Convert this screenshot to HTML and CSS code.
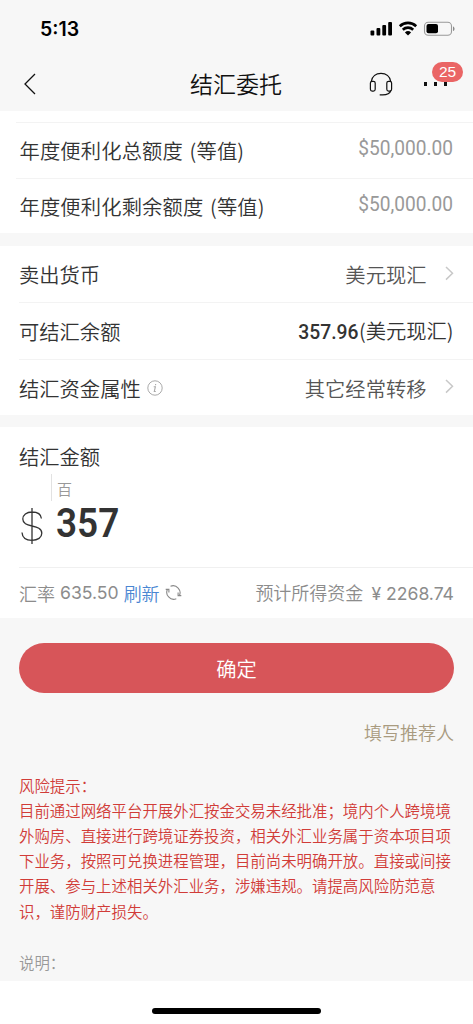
FILE: index.html
```
<!DOCTYPE html>
<html lang="zh-CN">
<head>
<meta charset="utf-8">
<meta name="viewport" content="width=device-width, initial-scale=1">
<title>结汇委托</title>
<link rel="stylesheet" href="styles.css">
</head>
<body>
<div class="status">
  <span class="time">5:13</span>
  <svg class="status-icons" width="86" height="16" viewBox="0 0 86 16">
    <rect x="0.5" y="9.6" width="3.8" height="4.9" rx="1"/>
    <rect x="6.5" y="7" width="3.8" height="7.5" rx="1"/>
    <rect x="12.3" y="4" width="3.8" height="10.5" rx="1"/>
    <rect x="18.2" y="1" width="3.8" height="13.5" rx="1"/>
    <path d="M29.8 5.2a11.8 11.8 0 0 1 16.4 0M32.8 8.7a7.6 7.6 0 0 1 10.4 0" fill="none" stroke="#000" stroke-width="2.6"/>
    <path d="M34.9 11.4a4.7 4.7 0 0 1 6.2 0L38 14.6z"/>
    <rect x="54.5" y="1.2" width="27" height="13" rx="3.8" fill="none" stroke="#999" stroke-width="1.1"/>
    <rect x="56.5" y="3.1" width="11.5" height="9.2" rx="2"/>
    <path d="M83 5.4c2 .7 2 3.900 0 4.600z" fill="#888"/>
  </svg>
</div>
<header class="nav">
  <svg class="back" width="12" height="22" viewBox="0 0 12 22"><path d="M11 1L1 11l10 10" fill="none" stroke="#111" stroke-width="1.3"/></svg>
  <h1 class="title">结汇委托</h1>
  <svg class="headset" width="24" height="24" viewBox="0 0 24 24" fill="none" stroke="#111" stroke-width="1.2">
    <path d="M2.300 9.500C3 4.300 7 1.300 12 1.300S21 4.300 21.700 9.500"/>
    <rect x="1.400" y="9.300" width="4.800" height="9.800" rx="1.800"/>
    <rect x="17.800" y="9.300" width="4.800" height="9.800" rx="1.800"/>
    <path d="M21.900 18.500c-.8 2.500-4.300 4.300-8.200 4.300h-3"/>
  </svg>
  <div class="more"><i></i><i></i><i></i><span class="badge">25</span></div>
</header>
<main>
  <section class="card quota">
    <div class="row"><span>年度便利化总额度 (等值)</span><span class="din light">$50,000.00</span></div>
    <div class="row"><span>年度便利化剩余额度 (等值)</span><span class="din light">$50,000.00</span></div>
  </section>
  <section class="card account">
    <div class="row"><span>卖出货币</span><span class="choice">美元现汇<svg width="9" height="15" viewBox="0 0 9 15"><path d="M1 1l6.500 6.300L1 13.600"/></svg></span></div>
    <div class="row"><span>可结汇余额</span><span class="balance"><b class="din">357.96</b>(美元现汇)</span></div>
    <div class="row"><span class="label">结汇资金属性<svg width="16" height="16" viewBox="0 0 16 16" fill="none" stroke="#aaa"><circle cx="8" cy="8" r="7.200"/><path d="M6.700 6.700h1.700L7.300 11.500h1.500M8.600 4v1.300" stroke-width="1.100"/></svg></span><span class="choice">其它经常转移<svg width="9" height="15" viewBox="0 0 9 15"><path d="M1 1l6.500 6.300L1 13.600"/></svg></span></div>
  </section>
  <section class="card amount">
    <div class="amount-label">结汇金额</div>
    <div class="unit">百</div>
    <div class="entry">
      <svg width="22" height="38" viewBox="0 0 22 38" fill="none" stroke="#333" stroke-width="1.300"><path d="M11 1v36M20.400 11.500C20 7.500 16.500 5 11 5S1.800 8 1.800 12c0 4.500 4 5.800 9.200 7s9.800 2.500 9.800 7.300c0 4.200-4 7-9.800 7S1.300 30.500 1 25.500"/></svg>
      <b class="din">357</b>
    </div>
    <div class="rate">
      <span class="rate-left">汇率 <span class="num">635.50</span> <a>刷新</a><svg width="17" height="17" viewBox="0 0 17 17" fill="none" stroke="#888" stroke-width="1.100"><path d="M5.500 2.200A7 7 0 0 1 14.300 11.800M11.300 14.800A7 7 0 0 1 2.500 5.200M.7 5.400h3.200v3.200M16.300 11.600h-3.200V8.400"/></svg></span>
      <span>预计所得资金 <span class="num yen">¥ 2268.74</span></span>
    </div>
  </section>
  <button class="confirm">确定</button>
  <a class="referrer">填写推荐人</a>
  <div class="risk">风险提示：<br>目前通过网络平台开展外汇按金交易未经批准；境内个人跨境境<br>外购房、直接进行跨境证券投资，相关外汇业务属于资本项目项<br>下业务，按照可兑换进程管理，目前尚未明确开放。直接或间接<br>开展、参与上述相关外汇业务，涉嫌违规。请提高风险防范意<br>识，谨防财产损失。</div>
  <div class="note">说明：</div>
</main>
<footer class="home"><span></span></footer>
</body>
</html>
```

FILE: styles.css
```
* { box-sizing: border-box; }
body {
  margin: 0;
  width: 473px;
  height: 1024px;
  overflow: hidden;
  display: flex;
  flex-direction: column;
  background: #f7f7f7;
  color: #333;
  font: 350 20.3px/28px "Noto Sans CJK SC", sans-serif;
  white-space: nowrap;
}
svg { flex: none; display: block; }
.status {
  height: 58px;
  flex: none;
  display: flex;
  justify-content: space-between;
  padding: 15px 17px 0 40px;
}
.time { font: 600 19.500px/28px Inter, sans-serif; color: #000; }
.status-icons { margin-top: 6px; }
.nav {
  height: 52.500px;
  flex: none;
  display: flex;
  align-items: center;
  padding: 0 19px 0 24px;
}
.title {
  margin: -3px 0 0 154px;
  width: 94px;
  font-size: 23px;
  font-weight: 350;
  color: #111;
}
.headset { margin-left: 85px; }
.more {
  position: relative;
  display: flex;
  gap: 7px;
  width: 26px;
  margin-left: 31px;
}
.more i { width: 3px; height: 4px; background: #111; }
.badge {
  position: absolute;
  left: 8px;
  top: -20.500px;
  width: 31px;
  height: 20px;
  border-radius: 10px;
  background: #ea6565;
  color: #fff;
  text-align: center;
  font: 400 15.500px/20px "Liberation Sans", sans-serif;
}
main { flex: none; height: 870.500px; display: flex; flex-direction: column; }
.card { background: #fff; flex: none; padding-left: 19px; }
.quota { height: 122.500px; padding-top: 11.500px; padding-left: 16px; margin-bottom: 12.500px; }
.quota .row { height: 55.500px; padding-left: 3.500px; border-top: 1px solid #f3f3f3; word-spacing: 2px; }
.quota .row > span:first-child { letter-spacing: .15px; }
.row {
  display: flex;
  align-items: center;
  justify-content: space-between;
  padding-right: 19.500px;
}
.din { font-family: Roboto, sans-serif; font-size: 21px; display: inline-block; transform: scaleX(.92); transform-origin: right; }
.din.light { color: #999; font-weight: 400; margin-top: -4px; transform: scaleX(.91); }
.account { height: 169.500px; margin-bottom: 12px; }
.account .row { height: 57.500px; border-top: 1px solid #f3f3f3; }
.account .row:first-child { height: 56px; border-top: 0; padding-top: 1px; }
.account .row:last-child { height: 56px; }
.choice { display: flex; align-items: center; gap: 18px; color: #555; }
.choice svg { margin-top: -2px; }
.choice path { fill: none; stroke: #c8c8c8; stroke-width: 1.500; }
.balance .din { font-weight: 500; }
.label { display: flex; align-items: center; gap: 6px; }
.amount { height: 190.500px; padding-top: 15px; }
.unit {
  width: 40px;
  height: 27px;
  margin: 4px 0 0 32px;
  padding-left: 5px;
  border-left: 1px solid #e2e2e2;
  color: #999;
  font-size: 15px;
  line-height: 30px;
}
.entry { height: 66px; display: flex; align-items: flex-start; gap: 13px; padding: 6px 0 0 2px; }
.entry .din { font-size: 41px; line-height: 32px; font-weight: 600; transform: scaleX(.9); transform-origin: left; }
.rate {
  display: flex;
  align-items: center;
  justify-content: space-between;
  height: 50px;
  border-top: 1px solid #f0f0f0;
  padding-right: 19px;
  color: #8c8c8c;
  font-size: 18px;
}
.rate-left { display: flex; align-items: center; gap: 5px; }
.rate a { color: #4a86d2; }
.rate .num { font-family: Inter, sans-serif; font-size: 17.600px; font-weight: 380; }
.rate .yen { margin-left: 4px; }
.confirm {
  flex: none;
  width: 435px;
  height: 50px;
  margin: 25px 19px 0;
  padding: 1px 0 0;
  border: 0;
  border-radius: 25px;
  background: #d75559;
  color: #fff;
  font: inherit;
}
.referrer { align-self: flex-end; margin: 25px 19px 0 0; color: #a99b80; font-size: 18px; }
.risk { margin: 27px 0 0 19px; color: #d13c38; font-size: 15.430px; line-height: 25.200px; }
.note { margin: 24px 0 0 19px; color: #999; font-size: 15.400px; }
.home { flex: 1; background: #fff; padding: 26.500px 0 0 152px; }
.home span { display: block; width: 169px; height: 6px; border-radius: 3px; background: #000; }
```
